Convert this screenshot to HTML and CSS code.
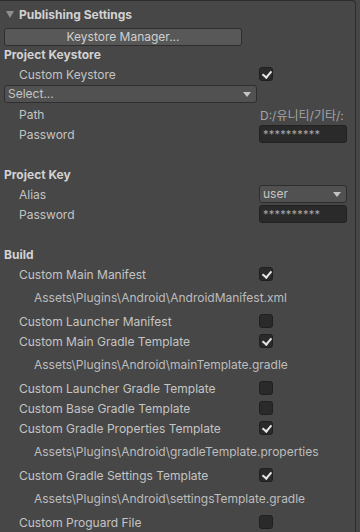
FILE: index.html
```html
<!doctype html>
<html lang="en">
<head>
  <meta charset="UTF-8" />
  <meta name="viewport" content="width=device-width, initial-scale=1.0" />
  <title>Publishing Settings</title>
  <link rel="stylesheet" href="styles.css">
</head>
<body>
  <div class="inspector">
    <!-- Foldout header -->
    <div class="foldout">
      <span class="foldout-arrow"></span>
      <span class="foldout-title">Publishing Settings</span>
    </div>

    <div class="button-row">
      <button class="btn">Keystore Manager...</button>
    </div>

    <!-- Project Keystore -->
    <div class="section-title">Project Keystore</div>
    <div class="prop">
      <span class="prop-label">Custom Keystore</span>
      <span class="checkbox checked"></span>
    </div>
    <div class="select-row">
      <div class="dropdown wide">Select...<span class="caret"></span></div>
    </div>
    <div class="prop">
      <span class="prop-label">Path</span>
      <div class="prop-value"><span>D:/유니티/기타/:</span></div>
    </div>
    <div class="prop">
      <span class="prop-label">Password</span>
      <span class="text-field">**********</span>
    </div>

    <div class="spacer"></div>

    <!-- Project Key -->
    <div class="section-title">Project Key</div>
    <div class="prop">
      <span class="prop-label">Alias</span>
      <div class="dropdown">user<span class="caret"></span></div>
    </div>
    <div class="prop">
      <span class="prop-label">Password</span>
      <span class="text-field">**********</span>
    </div>

    <div class="spacer"></div>

    <!-- Build -->
    <div class="section-title">Build</div>
    <div class="prop">
      <span class="prop-label">Custom Main Manifest</span>
      <span class="checkbox checked"></span>
    </div>
    <div class="asset-path">Assets\Plugins\Android\AndroidManifest.xml</div>
    <div class="prop">
      <span class="prop-label">Custom Launcher Manifest</span>
      <span class="checkbox"></span>
    </div>
    <div class="prop">
      <span class="prop-label">Custom Main Gradle Template</span>
      <span class="checkbox checked"></span>
    </div>
    <div class="asset-path">Assets\Plugins\Android\mainTemplate.gradle</div>
    <div class="prop">
      <span class="prop-label">Custom Launcher Gradle Template</span>
      <span class="checkbox"></span>
    </div>
    <div class="prop">
      <span class="prop-label">Custom Base Gradle Template</span>
      <span class="checkbox"></span>
    </div>
    <div class="prop">
      <span class="prop-label">Custom Gradle Properties Template</span>
      <span class="checkbox checked"></span>
    </div>
    <div class="asset-path">Assets\Plugins\Android\gradleTemplate.properties</div>
    <div class="prop">
      <span class="prop-label">Custom Gradle Settings Template</span>
      <span class="checkbox checked"></span>
    </div>
    <div class="asset-path">Assets\Plugins\Android\settingsTemplate.gradle</div>
    <div class="prop">
      <span class="prop-label">Custom Proguard File</span>
      <span class="checkbox"></span>
    </div>
  </div>
</body>
</html>
```

FILE: styles.css
```css
/* ------------------ Reset & Globals ------------------ */
* {
  margin: 0;
  padding: 0;
  box-sizing: border-box;
}
html,
body {
  height: 100%;
  overflow: hidden;
}
body {
  font-family: Inter, "Noto Sans CJK KR", sans-serif;
  font-size: 12px;
  background: #474747;
  color: #c4c4c4;
}

/* ------------------ Inspector frame ------------------ */
.inspector {
  width: 356px;
  min-height: 100%;
  border-top: 1px solid #2d2d2d;
  border-right: 1px solid #2d2d2d;
  border-top-right-radius: 4px;
}

/* ------------------ Foldout ------------------ */
.foldout {
  height: 26px;
  display: flex;
  align-items: center;
  padding-left: 6px;
  gap: 5px;
}
.foldout-arrow {
  width: 0;
  height: 0;
  border-left: 4.5px solid transparent;
  border-right: 4.5px solid transparent;
  border-top: 7px solid #8e8e8e;
  margin-top: 1px;
}
.foldout-title {
  font-weight: 700;
  color: #d2d2d2;
}

/* ------------------ Button ------------------ */
.button-row {
  height: 19px;
  padding: 1px 0 0 4px;
}
.btn {
  width: 238px;
  height: 18px;
  background: #585858;
  border: 1px solid #2e2e2e;
  border-radius: 3px;
  font: inherit;
  color: #d0d0d0;
  line-height: 16px;
}

/* ------------------ Rows ------------------ */
.section-title {
  height: 18px;
  line-height: 18px;
  padding-left: 4px;
  font-weight: 700;
  color: #d2d2d2;
}
.prop {
  height: 20px;
  display: grid;
  grid-template-columns: 259px 88px;
  align-items: center;
}
.prop-label {
  padding-left: 19px;
  white-space: nowrap;
}
.prop-value {
  width: 88px;
  padding-left: 1px;
  white-space: nowrap;
  overflow: hidden;
  color: #a4a4a4;
}
.asset-path {
  height: 27px;
  padding: 4px 0 0 34px;
  line-height: 20px;
  white-space: nowrap;
  color: #bdbdbd;
}
.spacer {
  height: 22px;
}

/* ------------------ Controls ------------------ */
.checkbox {
  width: 14px;
  height: 14px;
  background: #2a2a2a;
  border: 1px solid #1f1f1f;
  border-radius: 3px;
  position: relative;
}
.checkbox.checked::after {
  content: "";
  position: absolute;
  left: 4px;
  top: 1px;
  width: 4px;
  height: 7px;
  border-right: 2px solid #e6e6e6;
  border-bottom: 2px solid #e6e6e6;
  transform: rotate(40deg);
}
.select-row {
  height: 20px;
  padding: 1px 0 0 4px;
}
.dropdown {
  height: 18px;
  background: #515151;
  border: 1px solid #2e2e2e;
  border-radius: 3px;
  padding-left: 3px;
  line-height: 16px;
  position: relative;
  color: #c4c4c4;
}
.dropdown.wide {
  width: 253px;
}
.caret {
  position: absolute;
  right: 5px;
  top: 6px;
  width: 0;
  height: 0;
  border-left: 4px solid transparent;
  border-right: 4px solid transparent;
  border-top: 5px solid #c4c4c4;
}
.text-field {
  height: 18px;
  background: #2a2a2a;
  border: 1px solid #212121;
  border-radius: 3px;
  padding-left: 3px;
  line-height: 17px;
  font-size: 11px;
  letter-spacing: 0.2px;
  color: #a8a8a8;
  overflow: hidden;
}
```
